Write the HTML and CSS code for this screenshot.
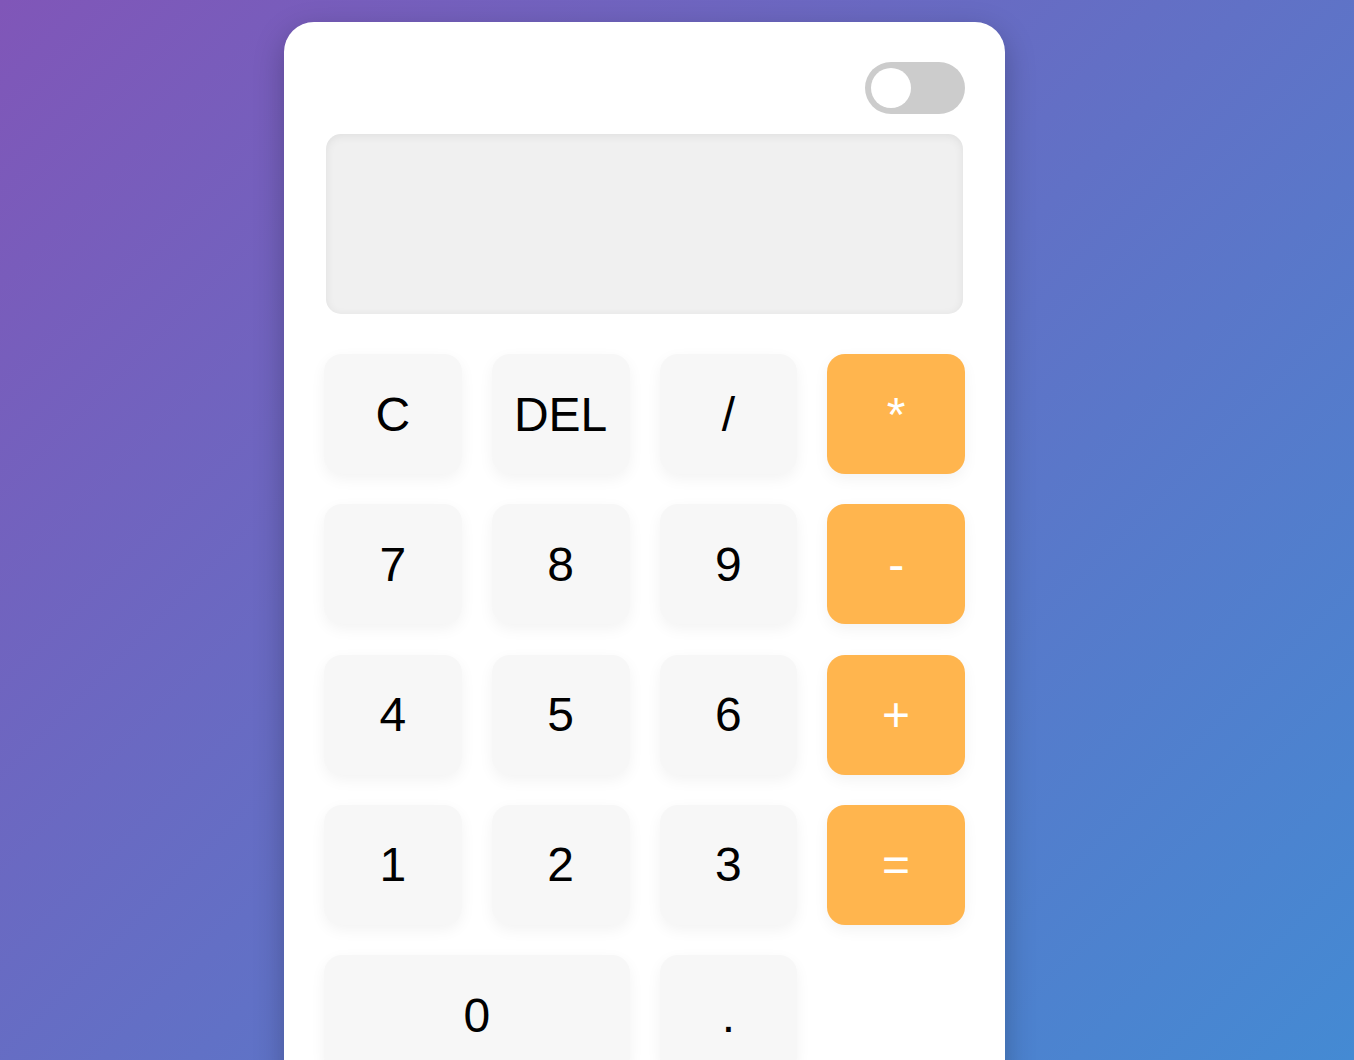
FILE: index.html
```html
<!DOCTYPE html>
<html lang="en">
<head>
<meta charset="utf-8">
<title>Calculator</title>
<link rel="stylesheet" href="styles.css">
</head>
<body>
<div class="page">
  <div class="calculator">
    <div class="top-bar">
      <label class="toggle"><span class="knob"></span></label>
    </div>
    <div class="display"></div>
    <div class="keys">
      <button class="key">C</button>
      <button class="key">DEL</button>
      <button class="key">/</button>
      <button class="key op">*</button>
      <button class="key">7</button>
      <button class="key">8</button>
      <button class="key">9</button>
      <button class="key op">-</button>
      <button class="key">4</button>
      <button class="key">5</button>
      <button class="key">6</button>
      <button class="key op">+</button>
      <button class="key">1</button>
      <button class="key">2</button>
      <button class="key">3</button>
      <button class="key op">=</button>
      <button class="key wide">0</button>
      <button class="key">.</button>
    </div>
  </div>
</div>
</body>
</html>
```
FILE: styles.css
```css
html, body {
  margin: 0;
  padding: 0;
}
body {
  min-height: 100vh;
  background: linear-gradient(135deg, #8056b8 0%, #448ad3 100%);
  background-attachment: fixed;
  font-family: "Liberation Sans", Arial, sans-serif;
}
.page {
  padding: 22px 0 0 284px;
}
.calculator {
  width: 721px;
  box-sizing: border-box;
  padding: 40px;
  background: #ffffff;
  border-radius: 30px;
  box-shadow: 0 10px 30px rgba(0, 0, 0, 0.25);
}
.top-bar {
  display: flex;
  justify-content: flex-end;
  margin-bottom: 20px;
}
.toggle {
  width: 100px;
  height: 52px;
  border-radius: 26px;
  background: #cccccc;
  display: flex;
  align-items: center;
  padding-left: 6px;
  box-sizing: border-box;
}
.knob {
  width: 40px;
  height: 40px;
  border-radius: 50%;
  background: #ffffff;
}
.display {
  height: 180px;
  margin: 0 2px 40px;
  background: #f0f0f0;
  border-radius: 15px;
  box-shadow: inset 0 2px 10px rgba(0, 0, 0, 0.07);
}
.keys {
  display: grid;
  grid-template-columns: repeat(4, 1fr);
  grid-auto-rows: 120px;
  column-gap: 30px;
  row-gap: 30.25px;
}
.key {
  border: none;
  margin: 0;
  padding: 0;
  background: #f7f7f7;
  border-radius: 18px;
  box-shadow: 0 5px 15px rgba(0, 0, 0, 0.05);
  font-family: "Liberation Sans", Arial, sans-serif;
  font-size: 48px;
  color: #000000;
}
.key.op {
  background: #ffb54e;
  color: #ffffff;
}
.key.wide {
  grid-column: span 2;
}
```
